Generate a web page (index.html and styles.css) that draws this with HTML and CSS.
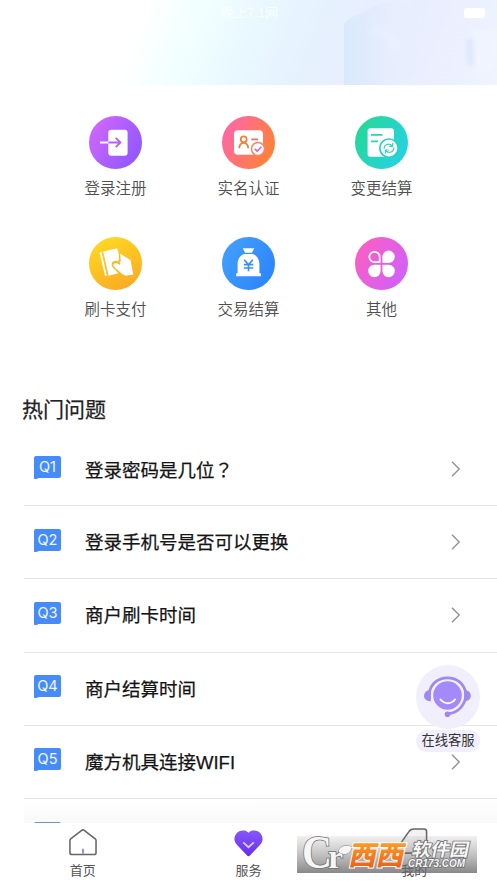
FILE: index.html
```html
<!DOCTYPE html>
<html lang="zh-CN">
<head>
<meta charset="utf-8">
<meta name="viewport" content="width=device-width, initial-scale=1">
<title>服务</title>
<link rel="stylesheet" href="styles.css">
</head>
<body>
<div class="app">
  <header class="hero">
    <svg class="hero-art" width="497" height="100" viewBox="0 0 497 100" aria-hidden="true">
      <defs>
        <linearGradient id="tower" x1="0" x2="1"><stop offset="0" stop-color="#d9eafc"/><stop offset=".35" stop-color="#e2ecfd"/><stop offset=".6" stop-color="#e8edfd" stop-opacity=".5"/><stop offset="1" stop-color="#e9edfd" stop-opacity="0"/></linearGradient>
        <filter id="soft" x="-30%" y="-30%" width="160%" height="160%"><feGaussianBlur stdDeviation="2"/></filter>
      </defs>
      <path d="M344 100V25q2-5 12-10 9-3 17-8 8-6 22-6l38 20v79z" fill="url(#tower)"/>
      <path d="M368 29q8-6 16 0l10 7q5 6 12 12l-12 2-10-13-12-2z" fill="#eef4ff" opacity=".35" filter="url(#soft)"/>
      <path d="M470 30h27v36q-10 9-21 4-3-12-3-30z" fill="#f1f5ff" opacity=".85" filter="url(#soft)"/>
      <path d="M466 40l7-3 1 29-7-2z" fill="#dfe8fd" filter="url(#soft)"/>
    </svg>
    <span class="clock">晚上7:1网</span>
    <span class="battery"></span>
  </header>

  <main class="sheet">
    <section class="features">
      <div class="feature">
        <svg class="feature-icon" viewBox="0 0 53 53">
          <defs><linearGradient id="g1" x1="0" y1=".2" x2="1" y2=".8"><stop stop-color="#d267fb"/><stop offset="1" stop-color="#8c57ff"/></linearGradient></defs>
          <circle cx="26.5" cy="26.5" r="26.5" fill="url(#g1)"/>
          <rect x="19.3" y="13.7" width="19.3" height="26" rx="3" fill="#fff"/>
          <path d="M11 26.5h9" stroke="#fff" stroke-width="1.8"/>
          <path d="M19.3 26.5H31M26.7 21.8l4.8 4.7-4.8 4.7" fill="none" stroke="#b860fb" stroke-width="1.8"/>
        </svg>
        <span>登录注册</span>
      </div>
      <div class="feature">
        <svg class="feature-icon" viewBox="0 0 53 53">
          <defs><linearGradient id="g2" x1="0" y1=".25" x2="1" y2=".75"><stop stop-color="#ff66aa"/><stop offset="1" stop-color="#ff842e"/></linearGradient></defs>
          <circle cx="26.5" cy="26.5" r="26.5" fill="url(#g2)"/>
          <rect x="12" y="14.2" width="29" height="24.5" rx="4" fill="#fff"/>
          <circle cx="21.7" cy="23.3" r="3" fill="none" stroke="#ef7f39" stroke-width="1.7"/>
          <path d="M17.3 32.2c0-7.2 8.8-7.2 8.8 0" fill="none" stroke="#ef7f39" stroke-width="1.8"/>
          <path d="M29.3 23.3H36" stroke="#ed6877" stroke-width="1.7"/>
          <circle cx="36" cy="33" r="6.5" fill="#fff" stroke="#f9875d" stroke-width="1.5"/>
          <path d="M32.8 32.8l2.5 2.4 4-4.5" fill="none" stroke="#da68d1" stroke-width="1.7"/>
        </svg>
        <span>实名认证</span>
      </div>
      <div class="feature">
        <svg class="feature-icon" viewBox="0 0 53 53">
          <defs><linearGradient id="g3" x1="0" y1=".2" x2="1" y2=".8"><stop stop-color="#26d894"/><stop offset="1" stop-color="#25d2e8"/></linearGradient></defs>
          <circle cx="26.5" cy="26.5" r="26.5" fill="url(#g3)"/>
          <rect x="12.6" y="12.3" width="26.3" height="28.4" rx="2.5" fill="#fff"/>
          <path d="M16 18.8h11.5M16 25.3h7" stroke="#28d5ac" stroke-width="1.8"/>
          <circle cx="34" cy="32.2" r="9.2" fill="#fff" stroke="#27d4b9" stroke-width="1.7"/>
          <path d="M29.2 32.8c-.4-4.2 5-6.4 8.3-2.7M38.8 31.5c.5 4.5-5 6.6-8.3 2.8M37.6 26.9v3.5h-3.3M30.4 37.5V34h3.4" fill="none" stroke="#31d5ba" stroke-width="1.2"/>
        </svg>
        <span>变更结算</span>
      </div>
      <div class="feature">
        <svg class="feature-icon" viewBox="0 0 53 53">
          <defs><linearGradient id="g4" x1=".2" y1="0" x2=".7" y2="1"><stop stop-color="#ffda22"/><stop offset="1" stop-color="#faaa24"/></linearGradient></defs>
          <circle cx="26.5" cy="26.5" r="26.5" fill="url(#g4)"/>
          <path d="M10.5 15.6l2-.5 5.3 23.7-1.7.4zM14.3 14.6l14-3.4 1.8 7.500-.5 5.500c-4.500-1.500-8 .8-6.500 4.500l6.300 7.500-9.800 2.600z" fill="#fff"/>
          <path d="M31.2 16.7l10.3 6.2 2.8 14.5-7.9 1.3-6.400-3.700c-8.600-5.600-7-11.500.8-7.500z" fill="#fff"/>
          <path d="M31 27.500c-1.200-3.300-7.600-3.800-7.500.3.200 3.400 5 5.600 7.600 8.300M30.500 17.500l.6 7" fill="none" stroke="#fbb823" stroke-width="1.400"/>
        </svg>
        <span>刷卡支付</span>
      </div>
      <div class="feature">
        <svg class="feature-icon" viewBox="0 0 53 53">
          <defs><linearGradient id="g5" x1="0" y1=".2" x2="1" y2=".8"><stop stop-color="#429ffd"/><stop offset="1" stop-color="#2c84fb"/></linearGradient></defs>
          <circle cx="26.5" cy="26.5" r="26.5" fill="url(#g5)"/>
          <path d="M20.8 11.3h11.4l-2.2 4.5h-7zM22.2 17h8.6c4.2 1.4 6.6 5.5 6.6 10v9.3h1.5v2.9H14.2v-2.9h1.4V27c0-4.7 2.4-8.6 6.6-10z" fill="#fff"/>
          <path d="M22.2 22.7l4.3 5 4.3-5M21.8 27.7h9.4M21.8 31h9.4M26.5 27.7v6.5" fill="none" stroke="#3790f9" stroke-width="1.7"/>
        </svg>
        <span>交易结算</span>
      </div>
      <div class="feature">
        <svg class="feature-icon" viewBox="0 0 53 53">
          <defs><linearGradient id="g6" x1="0" y1=".2" x2="1" y2=".8"><stop stop-color="#fb5fc2"/><stop offset="1" stop-color="#cf60fc"/></linearGradient></defs>
          <circle cx="26.5" cy="26.5" r="26.5" fill="url(#g6)"/>
          <path d="M24.7 25.2v-5.3a5.2 5.2 0 1 0-5.2 5.3z" fill="none" stroke="#fff" stroke-width="1.8"/>
          <path d="M27.4 26v-6.2a6.2 6.2 0 1 1 6.2 6.2zM25.6 27.8v6.2a6.2 6.2 0 1 1-6.2-6.2zM27.4 27.8h6.2a6.2 6.2 0 1 1-6.2 6.2z" fill="#fff"/>
        </svg>
        <span>其他</span>
      </div>
    </section>

    <h1 class="section-title">热门问题</h1>
    <ul class="questions">
      <li class="question"><span class="tag">Q1</span><span class="question-text">登录密码是几位<span class="question-mark" lang="zh-TW">？</span></span><svg class="chevron" viewBox="0 0 10 16"><path d="M1 .8L8.2 8 1 15.2"/></svg></li>
      <li class="question"><span class="tag">Q2</span><span class="question-text">登录手机号是否可以更换</span><svg class="chevron" viewBox="0 0 10 16"><path d="M1 .8L8.2 8 1 15.2"/></svg></li>
      <li class="question"><span class="tag">Q3</span><span class="question-text">商户刷卡时间</span><svg class="chevron" viewBox="0 0 10 16"><path d="M1 .8L8.2 8 1 15.2"/></svg></li>
      <li class="question"><span class="tag">Q4</span><span class="question-text">商户结算时间</span></li>
      <li class="question"><span class="tag">Q5</span><span class="question-text">魔方机具连接WIFI</span><svg class="chevron" viewBox="0 0 10 16"><path d="M1 .8L8.2 8 1 15.2"/></svg></li>
      <li class="question question-partial"><span class="tag"></span></li>
    </ul>
  </main>

  <nav class="tabs">
    <div class="tab">
      <svg class="tab-icon" viewBox="0 0 30 30"><path d="M2.8 11.2L14.2 2.4q1.3-1 2.6 0l11.400 8.800q.8.7.8 1.800v12.600q0 1.900-1.900 1.900H3.900Q2 27.500 2 25.600V13q0-1.100.8-1.800z" fill="none" stroke="#666" stroke-width="1.600"/><path d="M15.500 21.500v5.200" stroke="#a08af5" stroke-width="2.200"/></svg>
      <span>首页</span>
    </div>
    <div class="tab">
      <svg class="tab-icon" viewBox="0 0 30 30"><defs><linearGradient id="heart" x2="0" y2="1"><stop stop-color="#8757f8"/><stop offset="1" stop-color="#662eee"/></linearGradient></defs><path d="M15 4.800C11.500 1.500 5.300 2.200 2.300 6-.4 9.800-.1 13.800 3 17.200l10.500 11.300q1.500 1.500 3 0L27 17.200c3.100-3.400 3.400-7.400.7-11.200C24.700 2.200 18.500 1.500 15 4.800z" fill="url(#heart)"/><path d="M9.500 14.800l5.500 5 5.500-5" fill="none" stroke="#dccaff" stroke-width="1.900"/></svg>
      <span>服务</span>
    </div>
    <div class="tab">
      <svg class="tab-icon" viewBox="0 0 30 30"><path d="M3 26q-1-2-1-4v-8L9 4q2-3 5-3h11q2.500 0 2.500 2.500V22q0 4-4 4z" fill="#f2f2f2" stroke="#666" stroke-width="1.600"/></svg>
      <span>我的</span>
    </div>
  </nav>

  <aside class="support">
    <svg class="support-icon" viewBox="0 0 64 64">
      <circle cx="32" cy="32" r="32" fill="#f2effd"/>
      <circle cx="31.5" cy="30.500" r="14.300" fill="#a48af8"/>
      <path d="M13.300 34.500V29C15 7.500 48 7.500 49.700 29v1c0 9-7 17.500-17 18.700" fill="none" stroke="#9f88ef" stroke-width="2.700"/>
      <path d="M14.800 25v11.200C6 36.500 5.800 25.200 14.800 25zM48.200 25v11.200c8.800.3 9-11 0-11.200z" fill="#9f88ef"/>
      <circle cx="31.500" cy="49.300" r="2.800" fill="#9f88ef"/>
      <path d="M24.500 34.500c4 5 10.500 5 14.500 0" fill="none" stroke="#fff" stroke-width="2" stroke-linecap="round"/>
    </svg>
    <span class="support-label">在线客服</span>
  </aside>

  <svg class="brand" width="180" height="37" viewBox="0 0 180 37">
    <defs>
      <linearGradient id="plate" x2="0" y2="1"><stop stop-color="#888" stop-opacity=".12"/><stop offset="1" stop-color="#666" stop-opacity=".78"/></linearGradient>
      <linearGradient id="flame" x2="0" y2="1"><stop stop-color="#ffb52b"/><stop offset="1" stop-color="#ec5118"/></linearGradient>
    </defs>
    <rect width="180" height="37" fill="url(#plate)"/>
    <g class="brand-text">
      <text class="brand-c" x="5" y="32" textLength="30" lengthAdjust="spacingAndGlyphs">C</text>
      <text class="brand-r" x="31" y="32">r</text>
      <path d="M42 14c3-5 8-5 13-3-2 7-7 9-13 5z" fill="#f5f5f5" stroke="#777" stroke-width=".9"/>
      <text class="brand-name" transform="translate(51 29) skewX(-12)" textLength="55" lengthAdjust="spacingAndGlyphs">西西</text>
      <text class="brand-kind" transform="translate(114 20) skewX(-12)" textLength="57" lengthAdjust="spacingAndGlyphs">软件园</text>
      <text class="brand-url" x="111" y="31" textLength="57" lengthAdjust="spacingAndGlyphs">CR173.COM</text>
    </g>
  </svg>
</div>
</body>
</html>
```
FILE: styles.css
```css
* {
  box-sizing: border-box;
}

body {
  margin: 0;
  font-family: "Liberation Sans", "Noto Sans CJK SC", sans-serif;
  background: #fff;
}

.app {
  position: relative;
  width: 497px;
  height: 883px;
  overflow: hidden;
  display: flex;
  flex-direction: column;
}

.hero {
  position: relative;
  flex: 0 0 85px;
  background: linear-gradient(112deg, #fff 28%, #f1ffff 39%, #e9f8ff 50%, #e6f1fe 62%, #e8effe 72%, #eaeefe 84%, #eff4ff);
}

.hero-art {
  position: absolute;
  top: 0;
  left: 0;
}

.clock {
  position: absolute;
  top: 4px;
  left: 221px;
  font-size: 13px;
  line-height: 18px;
  color: rgba(255, 255, 255, .8);
}

.battery {
  position: absolute;
  top: 8px;
  right: 12px;
  width: 21px;
  height: 10px;
  border-radius: 2px;
  background: #fff;
}

.sheet {
  position: relative;
  flex: 1;
  min-height: 0;
  overflow: hidden;
  background: #fff;
  border-top-right-radius: 7px;
}

.features {
  display: grid;
  grid-template-columns: repeat(3, 133px);
  grid-auto-rows: 121px;
  justify-content: center;
  padding-top: 31px;
}

.feature {
  display: flex;
  flex-direction: column;
  align-items: center;
  gap: 9px;
  font-size: 15.5px;
  line-height: 22px;
  font-weight: 350;
  color: #505050;
}

.feature-icon {
  width: 53px;
  height: 53px;
}

.section-title {
  margin: 36px 0 0 22px;
  font-size: 21px;
  line-height: 32px;
  font-weight: 400;
  color: #222;
  -webkit-text-stroke: .25px #222;
}

.questions {
  list-style: none;
  margin: 7px 0 0 24px;
  padding: 0;
}

.question {
  display: flex;
  align-items: center;
  height: 73.2px;
  padding: 0 36px 0 10px;
  border-bottom: 1px solid #e6e6e8;
}

.tag {
  position: relative;
  flex: 0 0 27px;
  height: 22px;
  margin-right: 24px;
  margin-top: -5px;
  border-radius: 2px;
  background: #458cfa;
  color: #f4f8ff;
  font-family: Inter, sans-serif;
  font-size: 14.5px;
  line-height: 22px;
  text-align: center;
}

.tag::after {
  content: "";
  position: absolute;
  left: 0;
  top: 20px;
  width: 5px;
  height: 3px;
  background: #458cfa;
  border-radius: 0 0 4px 1px;
}

.question-text {
  padding-top: 2px;
  font-size: 18.5px;
  line-height: 28px;
  font-weight: 400;
  color: #141414;
  -webkit-text-stroke: .25px #141414;
}

.question-mark {
  font-family: "Noto Sans CJK TC", sans-serif;
}

.chevron {
  width: 10px;
  height: 16px;
  margin-left: auto;
  fill: none;
  stroke: #929292;
  stroke-width: 1.4;
}

.question-partial {
  align-items: flex-start;
  padding-top: 28px;
  background: linear-gradient(#fff, #f8f8f8 26px);
}

.question-partial .tag {
  background: #6898c8;
}

.tabs {
  position: relative;
  flex: 0 0 60px;
  display: grid;
  grid-template-columns: repeat(3, 1fr);
  background: #fff;
}

.tab {
  display: flex;
  flex-direction: column;
  align-items: center;
  padding-top: 5px;
  gap: 4px;
  font-size: 13px;
  line-height: 20px;
  color: #555;
}

.tab-icon {
  width: 29px;
  height: 29px;
}

.support {
  position: absolute;
  top: 665px;
  left: 416px;
  width: 64px;
  display: flex;
  flex-direction: column;
  align-items: center;
  gap: 1px;
}

.support-icon {
  width: 64px;
  height: 64px;
}

.support-label {
  width: 64px;
  height: 22px;
  border-radius: 11px;
  background: #f2effd;
  font-size: 13.3px;
  line-height: 22px;
  text-align: center;
  color: #333;
}

.brand {
  position: absolute;
  left: 297px;
  top: 836px;
  overflow: visible;
}

.brand-text {
  fill: #f6f6f6;
  stroke: #707070;
  stroke-width: 1.6px;
  paint-order: stroke;
  font-weight: 700;
}

.brand-c,
.brand-r {
  font-family: "Liberation Serif", serif;
  font-size: 46px;
}

.brand-r {
  font-size: 34px;
}

.brand-name {
  fill: url(#flame);
  stroke: #fff;
  stroke-width: 2px;
  font-family: "Noto Sans CJK SC", sans-serif;
  font-size: 27px;
  font-weight: 900;
}

.brand-kind {
  font-family: "Noto Sans CJK SC", sans-serif;
  font-size: 18px;
}

.brand-url {
  font-size: 10px;
  font-style: italic;
}
```
